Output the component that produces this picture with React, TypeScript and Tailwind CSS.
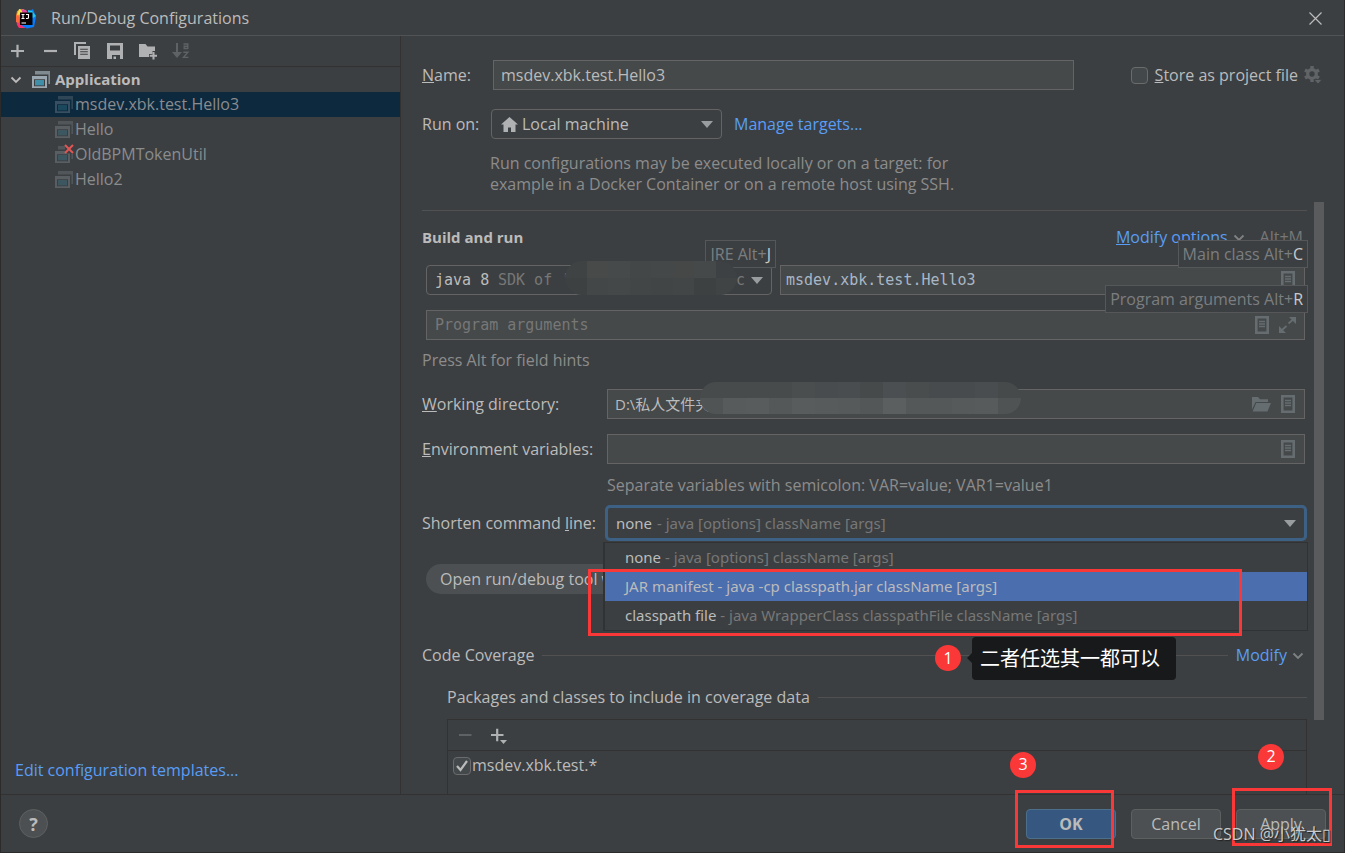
import React, { useState } from 'react'
import { clsx } from 'clsx'

const TREE = [
  { name: 'msdev.xbk.test.Hello3', broken: false },
  { name: 'Hello', broken: false },
  { name: 'OldBPMTokenUtil', broken: true },
  { name: 'Hello2', broken: false },
]

const SHORTEN_OPTIONS = [
  { name: 'none', hint: ' - java [options] className [args]' },
  { name: 'JAR manifest', hint: ' - java -cp classpath.jar className [args]' },
  { name: 'classpath file', hint: ' - java WrapperClass classpathFile className [args]' },
]

const IdeaLogo: React.FC = () => (
  <svg width="20" height="20" viewBox="0 0 20 20" aria-hidden="true">
    <path d="M1 2 L7 0 L11 4 L6 10 L0 7Z" fill="#fc8a2d" />
    <path d="M3 0 L9 1 L7 5 L1 6Z" fill="#f7e04b" />
    <path d="M0 8 L7 8 L9 19 L3 19 L1 16Z" fill="#fe2e6d" />
    <path d="M0 6 L4 8 L3 14 L0 13Z" fill="#fb6a3c" />
    <path d="M5 0 L10 1 L12 4 L7 5Z" fill="#e0489b" />
    <path d="M12 3 L17 0 L20 8 L18 18 L11 19.5 L6 17Z" fill="#087cfa" />
    <path d="M12 1 L16 2 L20 7 L17 9 L12 5Z" fill="#21c6f5" />
    <rect x="4" y="3.5" width="12.5" height="12.5" fill="#0a0203" />
    <path d="M5.5 5.5h3M7 5.5v4M5.500 9.5h3M10 5.5h2.500v3q0 1-1.200 1H10M5.500 14h4.500" stroke="#fff" strokeWidth="1.1" fill="none" />
  </svg>
)

const AppIcon: React.FC<{ broken?: boolean }> = ({ broken }) => (
  <svg width="19" height="17" viewBox="0 0 19 17" aria-hidden="true">
    <path d={broken ? 'M3 0h7v3.4H3zM16.400 8H18v5h-1.600z' : 'M3 0h15v13h-1.6V3.4H3z'} fill="#7f8b91" />
    <path
      fillRule="evenodd"
      d={broken ? 'M0 5h10l2 2.500h3V17H0zM2 8.200v7h11v-7z' : 'M0 5h15v12H0zM2 8.2v7h11v-7z'}
      fill="#9aa7b0"
    />
    <rect x="3" y="9" width="9" height="5.4" fill="#3f8fa9" />
  </svg>
)

const DocIcon: React.FC = () => (
  <svg width="14" height="18" viewBox="0 0 14 18" aria-hidden="true">
    <path fillRule="evenodd" d="M0 0h14v18H0zM2.6 2.6v12.8h8.8V2.6z" fill="#656d70" />
    <path d="M4 5.5h6M4 8h6M4 10.5h6" stroke="#656d70" strokeWidth="1.3" />
  </svg>
)

const FolderIcon: React.FC = () => (
  <svg width="19" height="15" viewBox="0 0 19 15" aria-hidden="true">
    <path d="M0 0h6l2 2.2h8V5H3.5L0 12.5z" fill="#656d70" />
    <path d="M4.2 6H19l-3.5 8.5H.6z" fill="#656d70" />
  </svg>
)

const Chevron: React.FC<{ className?: string }> = ({ className }) => (
  <svg width="12" height="8" viewBox="0 0 12 8" fill="none" className={className} aria-hidden="true">
    <path d="M1.5 1.5 6 6l4.5-4.5" stroke="currentColor" strokeWidth="1.8" />
  </svg>
)

const Triangle: React.FC<{ className?: string }> = ({ className }) => (
  <svg width="12" height="7" viewBox="0 0 12 7" className={className} aria-hidden="true">
    <path d="M0 0h12L6 7z" fill="#9a9da0" />
  </svg>
)

const TOOLBAR: { label: string; dim?: boolean; icon: React.ReactNode }[] = [
  { label: 'Add', icon: <path d="M4 9h13M10.5 2.7v12.6" stroke="currentColor" strokeWidth="2.2" /> },
  { label: 'Remove', icon: <path d="M4 9h13" stroke="currentColor" strokeWidth="2.2" /> },
  {
    label: 'Copy',
    icon: (
      <>
        <path d="M1 0h12v2H3v11H1z" fill="currentColor" />
        <path fillRule="evenodd" d="M5 4h12v13H5zM7.2 6.7v1.1h7.6V6.7zM7.2 9.2v1.1h7.6V9.2zM7.2 11.7v1.1h7.6v-1.1z" fill="currentColor" />
      </>
    ),
  },
  {
    label: 'Save',
    icon: <path fillRule="evenodd" d="M1 1h16v16h-3v-4H6v4H1zM4 3.5v5h10v-5zM7.5 14.5H10V17H7.5z" fill="currentColor" />,
  },
  {
    label: 'New folder',
    icon: (
      <>
        <path d="M0 2h6.5l2 2.5H16V9h-2.5v3H10v3H0z" fill="currentColor" />
        <path d="M14.5 10v7.5M10.7 13.7h7.6" stroke="currentColor" strokeWidth="2" />
      </>
    ),
  },
  {
    label: 'Sort',
    dim: true,
    icon: (
      <>
        <path d="M5 1v12" stroke="currentColor" strokeWidth="2" />
        <path d="M0 10h10l-5 6z" fill="currentColor" />
        <path d="M11.5 2h4.3v5M15.5 4.2h-3.3v2.3h3.5M11.3 10.2h4.6l-4.4 5.2h4.9" stroke="currentColor" strokeWidth="1.4" fill="none" />
      </>
    ),
  },
]

const AltHint: React.FC<{ text: string; hotkey: string; className: string }> = ({ text, hotkey, className }) => (
  <div className={clsx('absolute z-10 h-7 whitespace-nowrap border border-[#555758] bg-[#3c3f41] px-1 leading-[26px] text-[#7b7e80]', className)}>
    {text} Alt+<span className="text-[#c8cacc]">{hotkey}</span>
  </div>
)

const Badge: React.FC<{ n: number; className: string }> = ({ n, className }) => (
  <span className={clsx('absolute z-30 flex size-[26px] items-center justify-center rounded-full bg-[#fb3838] text-white', className)}>
    {n}
  </span>
)

const Smudge: React.FC<{ className: string; tiles: string[]; lower: string[] }> = ({ className, tiles, lower }) => (
  <div className={clsx('absolute z-20 flex flex-col overflow-hidden rounded-full', className)} aria-hidden="true">
    {[tiles, lower].map((row, i) => (
      <div key={i} className="flex flex-1">
        {row.map((c, j) => (
          <i key={j} className="flex-1" style={{ backgroundColor: c }} />
        ))}
      </div>
    ))}
  </div>
)

const field = 'flex h-[30px] items-center border border-[#646464] bg-[#45494a]'
const bare = 'min-w-0 flex-1 bg-transparent outline-none'
const mono = "font-['DejaVu_Sans_Mono',monospace] text-[15px]"
const dialogButton = 'h-[30px] w-[90px] rounded border pt-0.5'

export default function App() {
  const [selected, setSelected] = useState(TREE[0].name)
  const [active, setActive] = useState(1)

  return (
    <div className="flex min-h-screen flex-col border-x border-b border-[#2b2b2b] bg-[#3c3f41] font-['Open_Sans','Noto_Sans_CJK_SC',sans-serif] text-base leading-[21px] text-[#bbbbbb]">
      {/* Title bar */}
      <header className="flex h-9 items-center border-b border-[#505254] pl-[15px] pr-[22px] pt-0.5">
        <IdeaLogo />
        <h1 className="ml-[15px] flex-1">Run/Debug Configurations</h1>
        <button aria-label="Close">
          <svg width="13" height="13" viewBox="0 0 13 13" aria-hidden="true">
            <path d="M.5.5l12 12M12.5.5l-12 12" stroke="#bbbbbb" strokeWidth="1.2" />
          </svg>
        </button>
      </header>

      <div className="flex flex-1">
        {/* Configuration tree */}
        <aside className="flex w-[400px] shrink-0 flex-col border-r border-[#323232]">
          <div className="flex h-[31px] items-center gap-[15px] border-b border-[#323232] pl-[6px]">
            {TOOLBAR.map((t) => (
              <button key={t.label} aria-label={t.label} className={t.dim ? 'text-[#5f6264]' : 'text-[#afb1b3]'}>
                <svg width="18" height="18" viewBox="0 0 18 18" fill="none" aria-hidden="true">
                  {t.icon}
                </svg>
              </button>
            ))}
          </div>
          <div className="flex h-[25px] items-center pl-[9px] text-[15px] font-bold">
            <Chevron />
            <span className="ml-[10px] mr-1">
              <AppIcon />
            </span>
            Application
          </div>
          <ul>
            {TREE.map((item) => (
              <li key={item.name}>
                <button
                  onClick={() => setSelected(item.name)}
                  className={clsx(
                    'flex h-[25px] w-full items-center pl-[54px] text-left text-[#8a8c8e]',
                    selected === item.name && 'bg-[#0d293e]',
                  )}
                >
                  <span className="relative mr-px">
                    <span className="block opacity-30">
                      <AppIcon broken={item.broken} />
                    </span>
                    {item.broken && (
                      <svg width="10" height="10" viewBox="0 0 10 10" className="absolute -top-0.5 right-0" aria-hidden="true">
                        <path d="M1 1l8 8M9 1L1 9" stroke="#e05555" strokeWidth="2" />
                      </svg>
                    )}
                  </span>
                  {item.name}
                </button>
              </li>
            ))}
          </ul>
          <a href="#templates" className="mb-[13px] ml-[14px] mt-auto self-start text-[#589df6]">
            Edit configuration templates...
          </a>
        </aside>

        <main className="flex min-w-0 flex-1 flex-col pl-[21px] pt-6">
          <div className="flex items-center pr-[22px]">
            <label htmlFor="name" className="w-[71px]">
              <u>N</u>ame:
            </label>
            <div className={clsx(field, 'flex-1')}>
              <input id="name" defaultValue="msdev.xbk.test.Hello3" className={clsx(bare, 'px-[7px]')} />
            </div>
            <label className="ml-[57px] flex items-center gap-[7px]">
              <input type="checkbox" className="size-[17px] appearance-none rounded-sm border border-[#6b6b6b] bg-[#43494a]" />
              <span>
                <u>S</u>tore as project file
              </span>
            </label>
            <button aria-label="Storage settings" className="ml-[6px]">
              <svg width="18" height="18" viewBox="0 0 18 18" aria-hidden="true">
                <circle cx="8" cy="8" r="4.3" stroke="#616466" strokeWidth="3.2" fill="none" />
                <path d="M8 0v3M8 13v3M1 4l2.8 1.6M12.2 10.4L15 12M1 12l2.8-1.6M12.2 5.6L15 4" stroke="#616466" strokeWidth="3.4" />
                <path d="M10 13.5h8L14 18z" fill="#616466" stroke="#3c3f41" strokeWidth=".8" />
              </svg>
            </button>
          </div>

          <div className="mt-[19px] flex items-center">
            <label htmlFor="runOn" className="w-[69px]">
              Run on:
            </label>
            <div className="relative flex h-[30px] w-[231px] items-center rounded-sm border border-[#646464]">
              <svg width="17" height="15" viewBox="0 0 17 15" className="absolute left-[9px]" aria-hidden="true">
                <path d="M8.5 0L17 7.6h-2.5V15H10v-4.5H7V15H2.5V7.6H0z" fill="#afb1b3" />
              </svg>
              <select id="runOn" className="h-full w-full appearance-none bg-transparent pl-[30px] outline-none">
                <option>Local machine</option>
              </select>
              <Triangle className="pointer-events-none absolute right-2" />
            </div>
            <a href="#targets" className="ml-3 text-[#589df6]">
              Manage targets...
            </a>
          </div>
          <p className="ml-[68px] mt-[14px] text-[#8c8c8c]">
            Run configurations may be executed locally or on a target: for
            <br />
            example in a Docker Container or on a remote host using SSH.
          </p>

          <div className="mt-[7px] flex flex-1 pr-5">
            <div className="flex min-w-0 flex-1 flex-col pt-2">
              <hr className="border-[#515151]" />
              <div className="mt-4 flex items-center pr-1">
                <h2 className="flex-1 text-[15px] font-bold">Build and run</h2>
                <button className="flex items-center text-[#589df6]">
                  <u>M</u>odify options
                  <Chevron className="ml-[5px] text-[#7f8183]" />
                </button>
                <span className="ml-[15px] text-[#777777]">Alt+M</span>
              </div>

              <div className="mt-[17px] flex pl-1 pr-[2px]">
                <div className={clsx(mono, 'relative flex h-[30px] w-[346px] items-center rounded-sm border border-[#646464]')}>
                  <select aria-label="JRE" className="h-full w-full appearance-none bg-transparent pl-2 outline-none">
                    <option>java 8</option>
                  </select>
                  <span className="pointer-events-none absolute left-[71px] text-[#777777]">SDK of '</span>
                  <span className="pointer-events-none absolute right-[26px] text-[#777777]">c</span>
                  <Triangle className="pointer-events-none absolute right-2" />
                  <Smudge
                    className="-top-[5px] left-[138px] h-[34px] w-[172px]"
                    tiles={['#404344', '#484a4a', '#474a4a', '#444748', '#454849', '#464848', '#464949', '#3e4143']}
                    lower={['#3e4142', '#444747', '#454848', '#434647', '#424546', '#434646', '#3e4142', '#414445']}
                  />
                  <AltHint text="JRE" hotkey="J" className="-top-[26px] -right-[5px] font-['Open_Sans',sans-serif] text-base" />
                </div>
                <div className={clsx(field, 'relative ml-2 flex-1 pr-[9px]')}>
                  <input
                    aria-label="Main class"
                    defaultValue="msdev.xbk.test.Hello3"
                    className={clsx(bare, mono, 'pl-[5px] text-[#a9b7c6]')}
                  />
                  <DocIcon />
                  <AltHint text="Main class" hotkey="C" className="-top-[26px] -right-[4px]" />
                </div>
              </div>

              <div className={clsx(field, 'relative ml-1 mr-[2px] mt-[15px] gap-[10px] pr-2')}>
                <input
                  aria-label="Program arguments"
                  placeholder="Program arguments"
                  className={clsx(bare, mono, 'pl-2 placeholder:text-[#777777]')}
                />
                <DocIcon />
                <svg width="17" height="16" viewBox="0 0 17 16" aria-hidden="true">
                  <path d="M10 0h7v7zM0 9v7h7z" fill="#656d70" />
                  <path d="M9.5 6.5L14 2.5M3 13l4.5-4" stroke="#656d70" strokeWidth="1.8" />
                </svg>
                <AltHint text="Program arguments" hotkey="R" className="-top-[26px] -right-[4px]" />
              </div>
              <p className="mt-[10px] text-[#8c8c8c]">Press Alt for field hints</p>

              <div className="mt-[18px] flex items-center pr-[2px]">
                <label htmlFor="workDir" className="w-[185px]">
                  <u>W</u>orking directory:
                </label>
                <div className={clsx(field, 'relative flex-1 gap-[10px] pr-[9px]')}>
                  <input id="workDir" defaultValue="D:\私人文件夹" className={clsx(bare, 'pl-[7px] text-[15px]')} />
                  <FolderIcon />
                  <DocIcon />
                  <Smudge
                    className="-top-2 left-[92px] h-8 w-[321px]"
                    tiles={['#484b4c', '#484b4b', '#484b4b', '#484b4c', '#4a4e4f', '#484c4f', '#4a4d4f', '#474a4a', '#4c4f51', '#4a4d4e', '#484b4d', '#484b4d', '#4a4d50', '#474a4b']}
                    lower={['#515455', '#585b5b', '#595c5c', '#545858', '#585c5c', '#585b5c', '#565a5a', '#535758', '#5c5f60', '#545859', '#555859', '#575a5b', '#575b5b', '#505354']}
                  />
                </div>
              </div>

              <div className="mt-[15px] flex items-center pr-[2px]">
                <label htmlFor="env" className="w-[185px]">
                  <u>E</u>nvironment variables:
                </label>
                <div className={clsx(field, 'flex-1 pr-[9px]')}>
                  <input id="env" className={clsx(bare, 'pl-[7px]')} />
                  <DocIcon />
                </div>
              </div>
              <p className="ml-[185px] mt-[11px] text-[#8c8c8c]">Separate variables with semicolon: VAR=value; VAR1=value1</p>

              <div className="mt-[9px] flex items-center">
                <label htmlFor="shorten" className="w-[183px]">
                  Shorten command <u>l</u>ine:
                </label>
                <div className="relative flex h-9 flex-1 items-center rounded-[5px] border-[3px] border-[#3d6185] font-['Noto_Sans',sans-serif] text-[15px]">
                  <select id="shorten" className="h-full w-full appearance-none bg-transparent pl-2 outline-none">
                    <option>none</option>
                  </select>
                  <span className="pointer-events-none absolute left-[49px] text-[#777777]">- java [options] className [args]</span>
                  <Triangle className="pointer-events-none absolute right-2" />

                  {/* Open drop-down list */}
                  <ul role="listbox" aria-label="Shorten command line" className="absolute -left-[5px] -right-1 top-[34px] z-20 border border-l-2 border-[#303233] bg-[#3c3f41]">
                    {SHORTEN_OPTIONS.map((o, i) => (
                      <li
                        key={o.name}
                        role="option"
                        aria-selected={i === active}
                        onMouseEnter={() => setActive(i)}
                        className={clsx('h-[29px] whitespace-pre pl-5 leading-[29px]', i === active && 'bg-[#4b6eaf]')}
                      >
                        {o.name}
                        <span className={i === active ? '' : 'text-[#777777]'}>{o.hint}</span>
                      </li>
                    ))}
                  </ul>
                  <div className="pointer-events-none absolute -left-[20px] right-[62px] top-[61px] z-30 h-[67px] border-[3px] border-[#fb3838]" />
                </div>
              </div>

              <button className="ml-1 mt-[23px] h-[30px] self-start whitespace-nowrap rounded-full bg-[#4c5052] px-[14px] text-left">
                Open run/debug tool window
              </button>

              <div className="relative mt-[51px] flex items-center pr-[3px]">
                <h3>Code Coverage</h3>
                <hr className="ml-2 mr-2 flex-1 border-[#515151]" />
                <button className="flex items-center text-[#589df6]">
                  Modify
                  <Chevron className="ml-[5px] text-[#7f8183]" />
                </button>
                <Badge n={1} className="right-[346px] top-0" />
                <div className="absolute -top-2 right-[131px] z-20 h-[43px] w-[204px] rounded bg-[#18191b] pl-2 text-xl leading-[43px] text-white">
                  <i className="absolute -left-[5px] top-[15px] border-y-[6px] border-r-[6px] border-y-transparent border-r-[#18191b]" />
                  二者任选其一都可以
                </div>
              </div>

              <div className="mt-[21px] flex items-center pl-[25px]">
                <h3>Packages and classes to include in coverage data</h3>
                <hr className="ml-2 flex-1 border-[#515151]" />
              </div>
              <div className="ml-[25px] mt-[11px] flex-1 border border-b-0 border-[#323232]">
                <div className="flex h-[31px] items-center gap-[15px] border-b border-[#323232] pl-2">
                  <button aria-label="Remove pattern" className="text-[#5f6264]">
                    <svg width="18" height="18" viewBox="0 0 18 18" aria-hidden="true">
                      <path d="M3 9h12.5" stroke="currentColor" strokeWidth="2" />
                    </svg>
                  </button>
                  <button aria-label="Add pattern" className="text-[#afb1b3]">
                    <svg width="20" height="18" viewBox="0 0 20 18" aria-hidden="true">
                      <path d="M2 9h12.5M8.2 2.8v12.5" stroke="currentColor" strokeWidth="2.2" />
                      <path d="M11 14h7l-3.500 4z" fill="currentColor" />
                    </svg>
                  </button>
                </div>
                <label className="flex h-[29px] items-center gap-px pl-[5px]">
                  <span className="relative flex">
                    <input type="checkbox" defaultChecked className="peer size-[18px] appearance-none rounded-sm border border-[#6b6b6b] bg-[#43494a]" />
                    <svg width="12" height="12" viewBox="0 0 12 12" className="pointer-events-none absolute left-[3px] top-[3px] hidden peer-checked:block" aria-hidden="true">
                      <path d="M1 6l3.500 4L11 1" stroke="#bbbbbb" strokeWidth="2.2" fill="none" />
                    </svg>
                  </span>
                  msdev.xbk.test.*
                </label>
              </div>
            </div>
            <div className="ml-[7px] h-7/8 w-[10px] bg-[#595b5d]" />
          </div>
        </main>
      </div>

      {/* Dialog buttons */}
      <footer className="flex h-[58px] items-center gap-[15px] border-t border-[#323232] pl-[18px] pr-[18px]">
        <button aria-label="Help" className="mr-auto size-[29px] rounded-full border border-[#5e6060] bg-[#4c5052] text-lg font-bold leading-[26px]">
          ?
        </button>
        <div className="relative">
          <button className={clsx(dialogButton, 'border-[#4c708c] bg-[#365880] font-bold')}>OK</button>
          <div className="pointer-events-none absolute -left-[11px] -top-[19px] h-[58px] w-[99px] border-[3px] border-[#fb3838]" />
          <Badge n={3} className="-left-4 -top-[57px]" />
        </div>
        <button className={clsx(dialogButton, 'border-[#5e6060] bg-[#4c5052]')}>Cancel</button>
        <div className="relative">
          <button className={clsx(dialogButton, 'border-[#5e6060] bg-[#4c5052]')}>Apply</button>
          <div className="pointer-events-none absolute -left-1 -top-[21px] h-[58px] w-[100px] border-[3px] border-[#fb3838]" />
          <Badge n={2} className="left-[22px] -top-[65px]" />
          <span className="absolute -right-[5px] top-[14px] z-20 whitespace-nowrap leading-[22px] text-[#c9cbcc] [text-shadow:1px_1px_1px_#222]">
            CSDN @小犹太▯
          </span>
        </div>
      </footer>
    </div>
  )
}
